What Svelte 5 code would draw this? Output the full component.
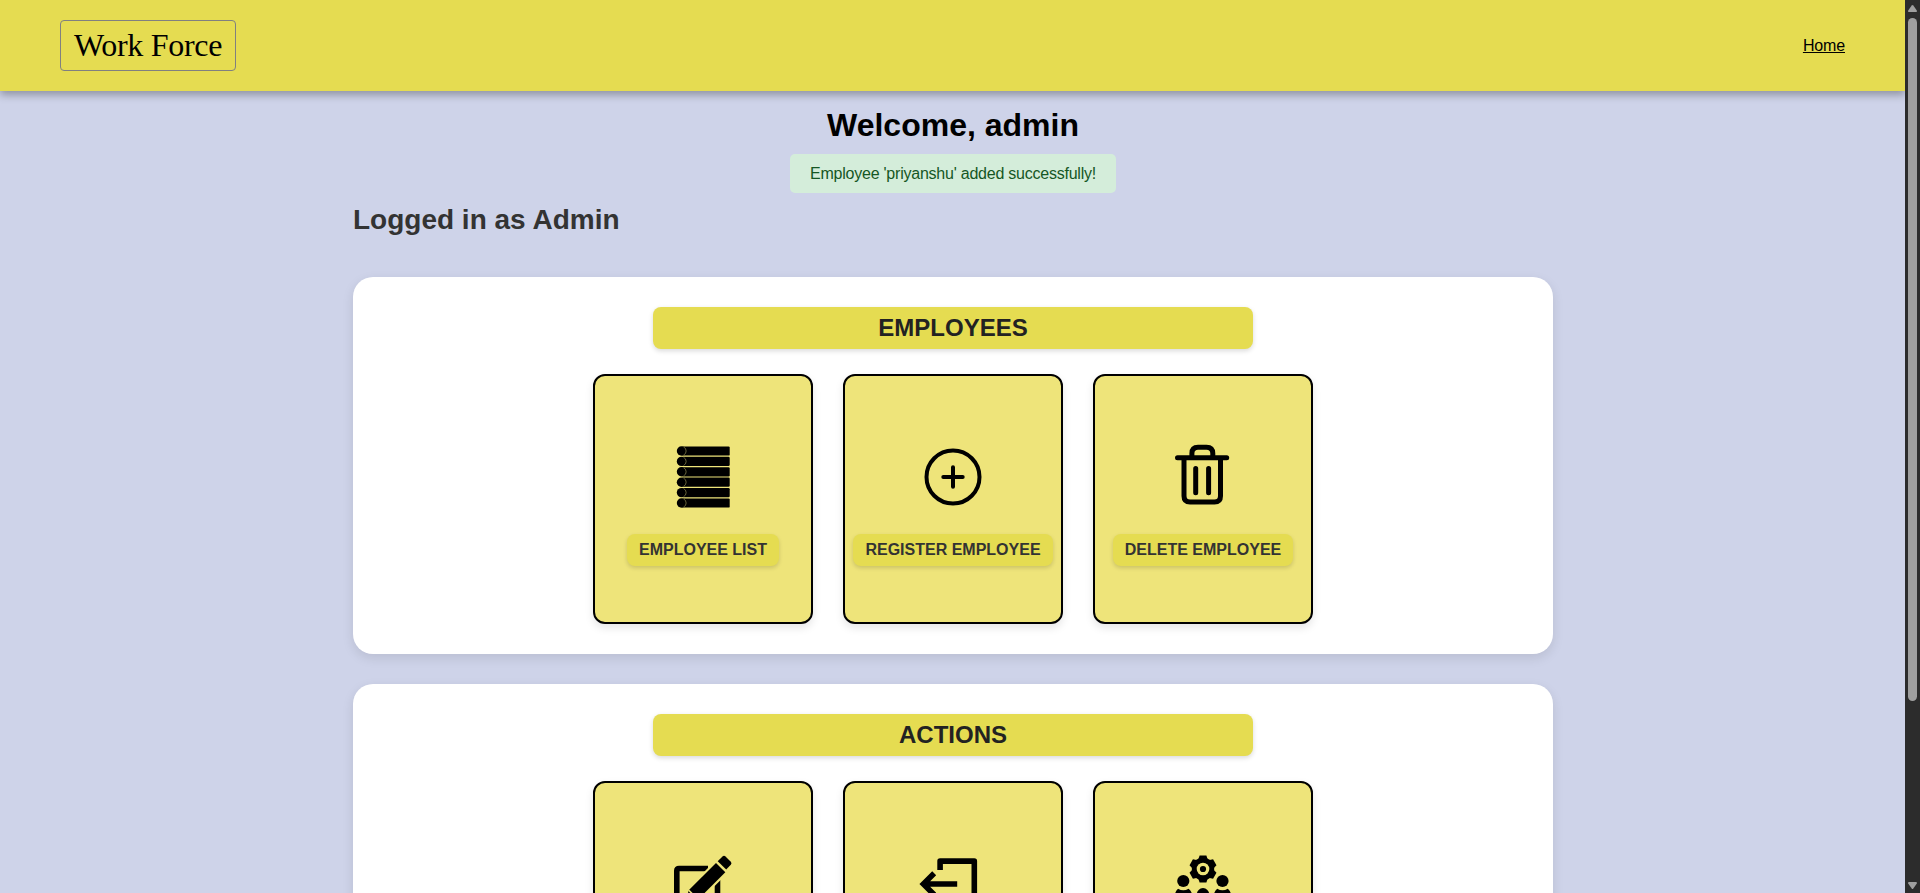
<script>
  const sections = [
    {
      title: 'EMPLOYEES',
      cards: [
        { icon: 'list', label: 'EMPLOYEE LIST' },
        { icon: 'plus', label: 'REGISTER EMPLOYEE' },
        { icon: 'trash', label: 'DELETE EMPLOYEE' }
      ]
    },
    {
      title: 'ACTIONS',
      cards: [
        { icon: 'edit', label: '' },
        { icon: 'logout', label: '' },
        { icon: 'team', label: '' }
      ]
    }
  ];
  const rows = [0, 1, 2, 3, 4, 5];
  const teeth = [0, 60, 120, 180, 240, 300];
</script>

<div class="window">
  <div class="page">
    <header>
      <div class="logo">Work Force</div>
      <nav><a href="#home">Home</a></nav>
    </header>
    <main>
      <h1>Welcome, admin</h1>
      <p class="flash">Employee 'priyanshu' added successfully!</p>
      <div class="container">
        <h2>Logged in as Admin</h2>
        {#each sections as section}
          <section>
            <h3>{section.title}</h3>
            <div class="cards">
              {#each section.cards as card}
                <div class="card">
                  <svg width="90" height="90" viewBox="0 0 90 90" fill="none" stroke="#000">
                    {#if card.icon === 'list'}
                      {#each rows as i}
                        <rect x="24" y={14.4 + i * 10.4} width="47.7" height="9.2" rx="1.2" fill="#000" stroke="none" />
                        <circle cx="23.5" cy={19 + i * 10.4} r="4.7" fill="#000" stroke="none" />
                        <path d="M25.5 {14.9 + i * 10.4}a4.5 4.5 0 0 1 0 8.2" stroke="#8f8a50" stroke-width=".7" />
                      {/each}
                    {:else if card.icon === 'plus'}
                      <circle cx="45" cy="45" r="26.5" stroke-width="4" />
                      <path d="M45 35.3v19.4M35.3 45h19.4" stroke-width="4" stroke-linecap="round" />
                    {:else if card.icon === 'trash'}
                      <path
                        d="M19.5 25.7h49.2M33.9 25V21.5Q33.9 15.3 40 15.3H48.5Q54.8 15.3 54.8 21.5V25M26 26V64Q26 70 32 70H56.5Q62.5 70 62.5 64V26M37.700 36.5v24.2M50.6 36.5v24.2"
                        stroke-width="5"
                        stroke-linecap="round"
                      />
                    {:else if card.icon === 'edit'}
                      <path d="M50 29.5H21Q18.8 29.5 18.8 31.7V72.5Q18.8 75 21 75H57.5Q59.5 75 59.5 72.5V41" stroke-width="5.6" />
                      <path d="M58 24L67.3 33.3L40 60.6L28 63L30.700 51.3Z" fill="#eee47a" stroke="#eee47a" stroke-width="4.400" />
                      <path d="M58 24L67.3 33.3L40 60.6L28 63L30.700 51.3Z" fill="#000" stroke="none" />
                      <path d="M59.7 22.2l4.8-4.8q1.5-1.2 3 0l5.3 5.3q1.4 1.5 0 3l-4.6 4.8z" fill="#000" stroke="none" />
                      <path d="M30 50.5l10.500 10.500" stroke="#eee47a" stroke-width="1.600" />
                    {:else if card.icon === 'logout'}
                      <path d="M32.1 31V22.1H66.3V68H32.1V59" stroke-width="5.6" stroke-linejoin="round" />
                      <path d="M49.2 45H15.5M26.2 34.2L15.4 45L26.2 55.8" stroke-width="5.6" />
                    {:else}
                      <g fill="#000" stroke="none">
                        <circle cx="45" cy="30" r="11.2" />
                        {#each teeth as angle}
                          <path d="M41.6 16.4h6.8l1.800 5.6h-10.400z" transform="rotate({angle} 45 30)" />
                        {/each}
                        <circle cx="45" cy="30" r="6.3" fill="#eee47a" />
                        <circle cx="45" cy="30" r="3.1" />
                        <circle cx="25.3" cy="42" r="6.1" />
                        <circle cx="64.5" cy="42" r="6.1" />
                        <circle cx="45" cy="55.3" r="6.2" />
                        <path d="M17 56.5q0-4.5 3-6.8q5.3 3.3 10.6 0q3.4 2.3 3.4 6.8v5H17zM56 56.5q0-4.5 3.2-6.8q5.3 3.3 10.6 0q3.2 2.3 3.2 6.8v5H56zM34 76v-5q0-5 5-7.5q6 3 12 0q5 2.500 5 7.500v5z" />
                      </g>
                    {/if}
                  </svg>
                  {#if card.label}<span class="label">{card.label}</span>{:else}<span class="spacer"></span>{/if}
                </div>
              {/each}
            </div>
          </section>
        {/each}
      </div>
    </main>
  </div>
  <div class="scrollbar">
    <svg width="9" height="7" viewBox="0 0 9 7"><path d="M3.7.6q.8-1 1.6 0L8.800 5.500Q9.200 7 8 7H1Q-.2 7 .2 5.500z" fill="#9f9f9f" /></svg>
    <div class="thumb"></div>
    <svg class="down" width="9" height="7" viewBox="0 0 9 7"><path d="M3.700 6.400q.8 1 1.600 0L8.800 1.500Q9.200 0 8 0H1Q-.2 0 .2 1.500z" fill="#9f9f9f" /></svg>
  </div>
</div>

<style>
  :global(body) { margin: 0; overflow: hidden; }
  .window {
    display: flex;
    height: 893px;
    overflow: hidden;
    font-family: "Liberation Sans", Arial, sans-serif;
  }
  .page { width: 1905px; flex: none; overflow: hidden; background: #ced3e9; }
  header {
    display: flex;
    justify-content: space-between;
    align-items: center;
    box-sizing: border-box;
    height: 91px;
    padding: 0 60px;
    background: #e5dc51;
    box-shadow: 0 4px 8px rgba(0, 0, 0, .3);
  }
  .logo {
    box-sizing: border-box;
    width: 176px;
    height: 51px;
    border: 1px solid #808080;
    border-radius: 4px;
    font: 32px/49px "Liberation Serif", "Times New Roman", serif;
    letter-spacing: -.3px;
    text-align: center;
    color: #000;
  }
  nav a { font-size: 16px; letter-spacing: -.15px; color: #000; }
  main { display: flex; flex-direction: column; align-items: center; padding-left: 1px; }
  h1 { margin: 16px 0 10px; font-size: 32px; line-height: 37px; color: #000; }
  .flash {
    box-sizing: border-box;
    width: 326px;
    margin: 0;
    padding: 10px 0;
    line-height: 19px;
    font-size: 16px;
    letter-spacing: -.23px;
    text-align: center;
    white-space: nowrap;
    color: #155724;
    background: #d4edda;
    border-radius: 5px;
  }
  .container { width: 1200px; }
  h2 { margin: 11px 0 41px; font-size: 28px; line-height: 32px; color: #333; }
  section {
    display: flex;
    flex-direction: column;
    align-items: center;
    box-sizing: border-box;
    height: 377px;
    margin-bottom: 30px;
    padding: 30px;
    background: #fff;
    border-radius: 20px;
    box-shadow: 0 4px 12px rgba(0, 0, 0, .1);
  }
  h3 {
    width: 600px;
    height: 42px;
    margin: 0 0 25px;
    font-size: 24px;
    line-height: 42px;
    text-align: center;
    color: #222;
    background: #e5dc51;
    border-radius: 8px;
    box-shadow: 0 2px 5px rgba(0, 0, 0, .15);
  }
  .cards { display: flex; gap: 30px; }
  .card {
    display: flex;
    flex-direction: column;
    align-items: center;
    justify-content: center;
    gap: 12px;
    box-sizing: border-box;
    width: 220px;
    height: 250px;
    background: #eee47a;
    border: 2px solid #000;
    border-radius: 12px;
    box-shadow: 0 4px 8px rgba(0, 0, 0, .1);
  }
  .card svg { display: block; flex: none; }
  .label {
    padding: 0 12px;
    font-size: 16px;
    font-weight: 600;
    line-height: 32px;
    white-space: nowrap;
    color: #333;
    background: #e5dc51;
    border-radius: 8px;
    box-shadow: 0 2px 4px rgba(0, 0, 0, .15);
  }
  .spacer { height: 32px; }
  .scrollbar {
    display: flex;
    flex-direction: column;
    align-items: center;
    box-sizing: border-box;
    width: 15px;
    padding: 5px 0 4px;
    background: #2c2c2c;
  }
  .scrollbar svg { display: block; flex: none; }
  .thumb { width: 9px; height: 683px; margin-top: 6px; border-radius: 5px; background: #9f9f9f; }
  .down { margin-top: auto; }
</style>
